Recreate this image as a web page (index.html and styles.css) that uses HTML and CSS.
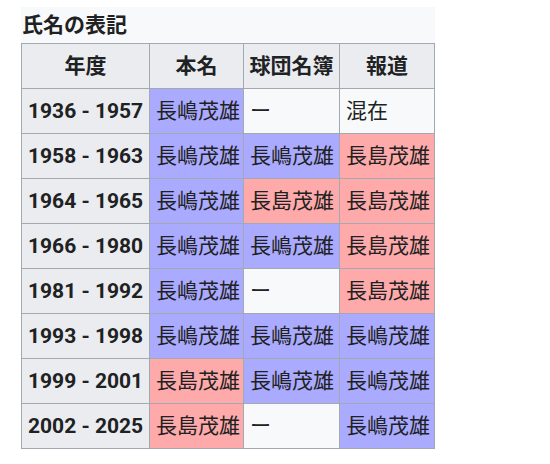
FILE: index.html
```html
<!DOCTYPE html>
<html lang="ja">
<head>
<meta charset="utf-8">
<link rel="stylesheet" href="styles.css">
</head>
<body>
<div class="wrap">
<table class="names">
<caption>氏名の表記</caption>
<colgroup><col class="c1"><col class="c2"><col class="c3"><col class="c4"></colgroup>
<thead>
<tr><th>年度</th><th>本名</th><th>球団名簿</th><th>報道</th></tr>
</thead>
<tbody>
<tr><th>1936 - 1957</th><td class="b">長嶋茂雄</td><td class="e">ー</td><td class="e">混在</td></tr>
<tr><th>1958 - 1963</th><td class="b">長嶋茂雄</td><td class="b">長嶋茂雄</td><td class="r">長島茂雄</td></tr>
<tr><th>1964 - 1965</th><td class="b">長嶋茂雄</td><td class="r">長島茂雄</td><td class="r">長島茂雄</td></tr>
<tr><th>1966 - 1980</th><td class="b">長嶋茂雄</td><td class="b">長嶋茂雄</td><td class="r">長島茂雄</td></tr>
<tr><th>1981 - 1992</th><td class="b">長嶋茂雄</td><td class="e">ー</td><td class="r">長島茂雄</td></tr>
<tr><th>1993 - 1998</th><td class="b">長嶋茂雄</td><td class="b">長嶋茂雄</td><td class="b">長嶋茂雄</td></tr>
<tr><th>1999 - 2001</th><td class="r">長島茂雄</td><td class="b">長嶋茂雄</td><td class="b">長嶋茂雄</td></tr>
<tr><th>2002 - 2025</th><td class="r">長島茂雄</td><td class="e">ー</td><td class="b">長嶋茂雄</td></tr>
</tbody>
</table>
</div>
</body>
</html>
```
FILE: styles.css
```css
html, body {
  margin: 0;
  padding: 0;
  background: #ffffff;
}
.wrap {
  padding: 7px 0 0 21px;
}
.names {
  font-family: "Roboto", "Noto Sans CJK JP", sans-serif;
  font-size: 21px;
  color: #202122;
  border-collapse: collapse;
  table-layout: fixed;
  width: 414px;
  border: 1px solid #a2a9b1;
  background: #f8f9fa;
}
.names caption {
  background: #f8f9fa;
  font-weight: bold;
  text-align: left;
  height: 36px;
  line-height: 36px;
  padding: 0 1px;
}
.c1 { width: 128px; }
.c2 { width: 94px; }
.c3 { width: 96px; }
.c4 { width: 95px; }
.names th, .names td {
  border: 1px solid #a2a9b1;
  height: 44px;
  line-height: 44px;
  padding: 0 6px;
  white-space: nowrap;
  overflow: hidden;
}
.names th {
  background: #eaecf0;
  font-weight: bold;
  text-align: center;
}
.names td {
  text-align: left;
}
.names thead th {
  padding: 0 3px;
}
.b { background: #aaaaff; }
.r { background: #ffaaaa; }
.e { background: #f8f9fa; }
```
